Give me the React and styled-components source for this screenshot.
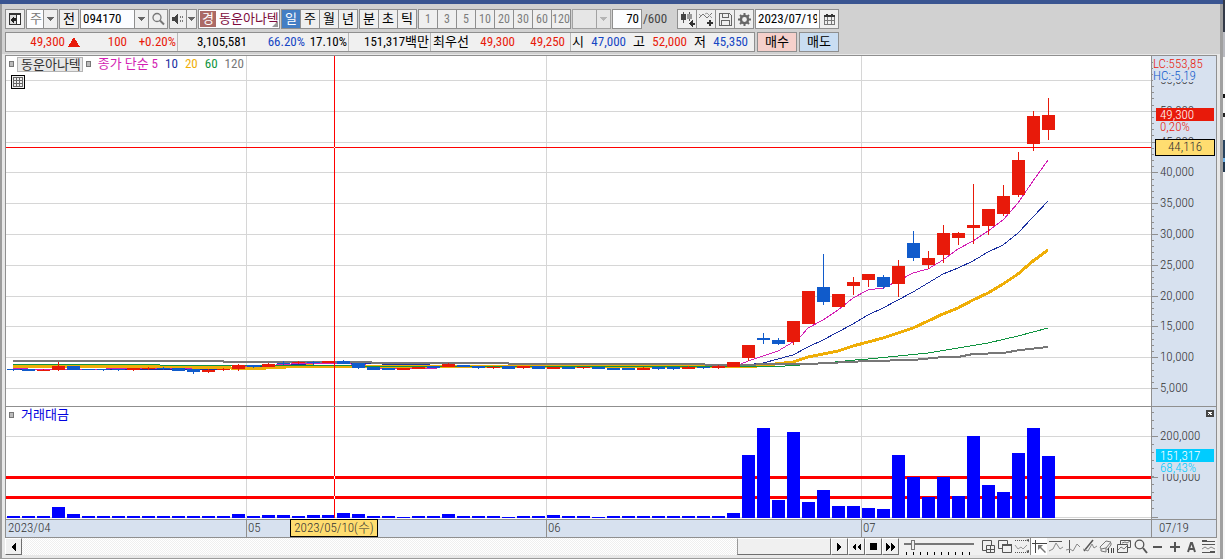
import React, { useState } from 'react'
import styled, { createGlobalStyle } from 'styled-components'

const GlobalStyle = createGlobalStyle`
* { box-sizing: border-box; }
body {
    margin: 0;
    background: #f6f6f6;
    font-family: "Liberation Sans Narrow", "Roboto Condensed", "Open Sans Condensed", "Liberation Sans", "Noto Sans CJK KR", sans-serif;
    font-size: 13px;
    line-height: 16px;
    color: #000;
}
button, input, select {
    font: inherit;
    color: inherit;
    margin: 0;
    padding: 0;
    border: 0;
    border-radius: 0;
    outline: none;
}
button { cursor: pointer; white-space: nowrap; }
svg { display: block; }
`

const UP = '#e81a0a'
const DOWN = '#105bcb'
const LINE = '#8f8f8f'
const GRID = '#d6d6d6'
const AXIS = '#d7e1ef'

/* ---------- window frame ---------- */

const Screen = styled.div`
    display: flex;
    min-height: 100vh;
`

const Window = styled.div`
    flex: 1;
    min-width: 0;
    display: flex;
    flex-direction: column;
    background: #e8e8e8;
    border-bottom: 1px solid #9c9c9c;
`

const Behind = styled.div`
    width: 2px;
    background: linear-gradient(#333a48 32px, #b9bac0 32px 57px, #f6f6f6 57px 94px, #111 94px 98px,
        #f6f6f6 98px 113px, #222 113px 117px, #f6f6f6 117px 140px, #29445f 140px 158px, #72b4e8 158px 162px, #22384f 162px 172px, #f6f6f6 172px);
`

const TitleStrip = styled.div`
    height: 4px;
    background: #3a5591;
`

const Body = styled.div`
    flex: 1;
    display: flex;
    flex-direction: column;
    border-left: 2px solid #9c9c9c;
    border-right: 3px solid #a0a0a0;
`

const Tools = styled.div`
    display: flex;
    flex-direction: column;
    gap: 3px;
    padding: 5px 3px 2px;
    background: #d1d1d1;
    border-bottom: 1px solid #e8e8e8;
`

const Row = styled.div`
    display: flex;
    gap: ${(p) => p.$gap || 1}px;
    height: 20px;
`

/* ---------- toolbar ---------- */

const Group = styled.div`
    position: relative;
    display: flex;
    width: ${(p) => p.$w}px;
    border: 1px solid ${LINE};
    background: ${(p) => (p.$white ? '#fcfdff' : '#efefef')};
    opacity: ${(p) => (p.$dim ? 0.7 : 1)};
`

const Tool = styled.button`
    flex: 1 1 0;
    min-width: 0;
    display: flex;
    align-items: center;
    justify-content: center;
    overflow: hidden;
    font-size: ${(p) => (p.$muted ? 12 : 13)}px;
    color: ${(p) => (p.$on ? '#fff' : p.$muted ? '#7c7c7c' : '#000')};
    background: ${(p) => (p.$on ? '#447ec4' : '#efefef')};
    & + & { border-left: 1px solid ${LINE}; }
`

const SideTool = styled(Tool)`
    flex: 0 0 ${(p) => p.$w}px;
    border-left: 1px solid ${LINE};
`

const Field = styled.input`
    flex: 1;
    width: 100%;
    min-width: 0;
    padding: 0 2px;
    text-align: ${(p) => p.$align || 'left'};
    background: #fcfdff;
`

const Select = styled.select`
    appearance: none;
    width: 100%;
    padding-left: 3px;
    background: transparent;
    color: #777;
    opacity: 1;
`

const SelectArrow = styled.span`
    position: absolute;
    right: 0;
    top: 0;
    bottom: 0;
    width: 14px;
    display: flex;
    align-items: center;
    justify-content: center;
    border-left: 1px solid ${LINE};
    background: #efefef;
    pointer-events: none;
`

const Badge = styled.span`
    width: 16px;
    height: 16px;
    margin: 1px 3px 1px 1px;
    text-align: center;
    color: #fff;
    background: #ab6a66;
`

const StockName = styled.span`
    line-height: 18px;
    color: #7d0a3c;
    white-space: nowrap;
`

const Fold = styled.span`
    position: absolute;
    right: 1px;
    bottom: 1px;
    border: 3px solid;
    border-color: transparent #999 #999 transparent;
`

const Total = styled.span`
    width: 33px;
    line-height: 20px;
    color: #444;
`

/* ---------- quote strip ---------- */

const Quote = styled.div`
    display: flex;
    width: 750px;
    border: 1px solid ${LINE};
    background: #f0f0f0;
`

const QuoteCell = styled.div`
    display: flex;
    width: ${(p) => p.$w}px;
    line-height: 18px;
    & + & { border-left: 1px solid #b8b8b8; }
`

const Value = styled.span`
    width: ${(p) => p.$w}px;
    text-align: right;
    white-space: nowrap;
    color: ${(p) => p.$color || '#000'};
`

const Mark = styled.span`
    width: 15px;
    display: flex;
    align-items: center;
    justify-content: flex-end;
`

const Order = styled.button`
    width: 40px;
    border: 1px solid ${LINE};
    background: ${(p) => (p.$buy ? '#f5d0cb' : '#c9ddf2')};
`

/* ---------- chart ---------- */

const Chart = styled.div`
    display: grid;
    grid-template-columns: minmax(0, 1fr) 66px;
    margin: 0 3px;
    border-top: 1px solid ${LINE};
    border-left: 1px solid ${LINE};
`

const Pane = styled.div`
    position: relative;
    background: #fff;
    border-bottom: 1px solid ${LINE};
`

const Scale = styled.div`
    position: relative;
    font-weight: 300;
    background: ${AXIS};
    border: 1px solid ${LINE};
    border-top: 0;
`

const Dates = styled.div`
    position: relative;
    font-weight: 300;
    background: ${AXIS};
    border-bottom: 1px solid ${LINE};
`

const LastDate = styled(Scale)`
    padding-left: 7px;
    color: #333;
`

const Legend = styled.div`
    position: absolute;
    left: 3px;
    top: 1px;
    display: flex;
    align-items: center;
    gap: 7px;
    height: 14px;
    white-space: nowrap;
`

const Dot = styled.span`
    width: 5px;
    height: 6px;
    border: 1px solid #777;
    background: #bbb;
`

const Tag = styled.span`
    height: 15px;
    line-height: 13px;
    padding: 0 1px 0 3px;
    margin: 0 -4px;
    border: 1px solid #b4b4b4;
    background: #e8e8e8;
    color: #333;
`

const Ink = styled.span`
    color: ${(p) => p.$color};
`

const GridButton = styled.button`
    position: absolute;
    left: 5px;
    top: 19px;
    width: 14px;
    height: 14px;
    border: 1px solid #000;
    background: #eee;
`

const CloseButton = styled.button`
    position: absolute;
    right: 2px;
    top: 3px;
    width: 8px;
    height: 7px;
    background: #444;
`

const CursorDate = styled.span`
    position: absolute;
    left: 284px;
    top: -1px;
    width: 88px;
    height: 18px;
    border: 1px solid #000;
    background: #ffdd70;
    color: #333;
    text-align: center;
    white-space: nowrap;
`

/* ---------- bottom bar ---------- */

const Bottom = styled.div`
    display: flex;
    height: 17px;
    margin: 0 3px 3px;
    background: #f0f0f0;
`

const Push = styled.button`
    width: 17px;
    display: flex;
    align-items: center;
    justify-content: center;
    background: #f0f0f0;
    border: 1px solid;
    border-color: #fff #6e6e6e #6e6e6e #fff;
`

const Track = styled.div`
    flex: 1;
    display: flex;
    justify-content: flex-end;
    background: repeating-conic-gradient(#fff 0 25%, #efefef 0 50%) 0 0 / 2px 2px;
`

const Thumb = styled.div`
    width: 94px;
    background: #f0f0f0;
    border: 1px solid;
    border-color: #fff #6e6e6e #6e6e6e #999;
`

const Zoom = styled.input`
    appearance: none;
    width: 70px;
    height: 17px;
    margin: 0 5px;
    background:
        linear-gradient(#777, #777) 0 5px / 100% 2px no-repeat,
        repeating-linear-gradient(90deg, transparent 0 2px, #000 2px 3px, transparent 3px 7px) 0 14px / 100% 3px no-repeat;
    &::-webkit-slider-thumb {
        appearance: none;
        width: 4px;
        height: 10px;
        margin-top: -4px;
        background: #f0f0f0;
        border: 1px solid #777;
    }
`

const DrawTool = styled.button`
    width: 17px;
    display: flex;
    align-items: center;
    justify-content: center;
    background: ${(p) => (p.$on ? '#fff' : 'transparent')};
    border-left: ${(p) => (p.$on ? '1px solid #888' : 0)};
`

/* ---------- icons ---------- */

const Icon = ({ children, w = 15, h = 15, crisp = true, color = '#555' }) => (
    <svg width={w} height={h} viewBox={`0 0 ${w} ${h}`} fill="none" stroke={color} strokeWidth="1"
        shapeRendering={crisp ? 'crispEdges' : 'auto'} aria-hidden="true">
        {children}
    </svg>
)

const Arrow = ({ color = '#666' }) => (
    <Icon w={7} h={4}><path d="M0 0h7L3.5 4z" fill={color} stroke="none" /></Icon>
)

const PanelIcon = () => (
    <Icon w={14} h={14} color="#333">
        <path d="M1 1h12v12H1z" fill="#333" stroke="none" />
        <path d="M2 3h6v9H2z" fill="#ddd" stroke="none" />
        <path d="M9 3h3v9H9z" fill="#fff" stroke="none" />
        <path d="M6 4v8L2 8z" fill="#222" stroke="none" />
        <path d="M5 6h3v3H5z" fill="#222" stroke="none" />
    </Icon>
)

const SearchIcon = () => (
    <Icon w={14} h={14} crisp={false} color="#777">
        <circle cx="6" cy="5.5" r="4" strokeWidth="1.3" />
        <path d="M9 8.5l4 4" strokeWidth="2" />
    </Icon>
)

const SpeakerIcon = () => (
    <Icon w={14} h={14} color="#444">
        <path d="M1 5h2l4-4v12l-4-4H1z" fill="#444" stroke="none" />
        <path d="M9 4h1v2H9zM9 8h1v2H9zM11 4h1v2h-1zM11 8h1v2h-1z" fill="#777" stroke="none" />
    </Icon>
)

const CandleIcon = () => (
    <Icon w={17} h={16}>
        <path d="M4.5 1v11M10.5 1v9" />
        <path d="M2 3h5v6H2z" fill="#444" stroke="none" />
        <path d="M8 3h5v5H8z" fill="#999" stroke="none" />
        <path d="M12 12h4v2h-4zM14 9v7l-4-3.500z" fill="#333" stroke="none" />
    </Icon>
)

const WaveIcon = () => (
    <Icon w={17} h={16} crisp={false}>
        <path d="M1 7l4-4 4 4 5-5" stroke="#777" />
        <path d="M1 3l2 2M7 3l2-1 5 5" stroke="#999" />
        <path d="M9 11h6v2H9zM11 9h2v6h-2z" fill="#333" stroke="none" />
    </Icon>
)

const SaveIcon = () => (
    <Icon w={15} h={15} color="#666">
        <path d="M1.5 1.5h10l2 2v10h-12zM4.5 1.5v4h6v-4M3.5 13.5v-5h8v5" strokeWidth="1.4" />
    </Icon>
)

const GearIcon = () => (
    <Icon w={15} h={15} crisp={false} color="#666">
        <circle cx="7.5" cy="7.5" r="3.6" strokeWidth="2.4" />
        <path d="M7.5 1v2.5M7.5 11.500v2.500M1 7.500h2.500M11.500 7.500H14M3 3l1.500 1.500M10.500 10.500L12 12M12 3l-1.500 1.500M4.500 10.500L3 12" strokeWidth="2" />
    </Icon>
)

const CalendarIcon = () => (
    <Icon w={13} h={13} color="#777">
        <path d="M1.500 2.500h10v9h-10zM4.500 4v8M8.500 4v8M2 7.500h10" />
        <path d="M1 2h11v2H1zM3 1h2v1H3zM8 1h2v1H8z" fill="#333" stroke="none" />
    </Icon>
)

const drawTools = [
    ['새 창', <><path d="M2.500 1.500h9v10h-9z" /><path d="M6.500 6.500h8v7h-8zM10.500 6.500v7M6.500 10.500h8" fill="#f0f0f0" /></>],
    ['겹치기', <><path d="M1.500 1.500h9v8h-9z" /><path d="M5.500 5.500h9v8h-9z" fill="#f0f0f0" /><path d="M5 5h10v2H5z" fill="#555" stroke="none" /></>],
    ['구간', <><path d="M1 1.500h13M1 13.500h13" strokeDasharray="1 1" /><path d="M1 6l3 4 3-2 2 2 4-4" stroke="#999" /><path d="M12 1l3 2v-3zM12 12l3 2v-3z" fill="#555" stroke="none" /></>],
    ['십자선', <><path d="M3.500 1v13M0 4.500h15" stroke="#444" /><path d="M6 6h5l-2 2 5 5-1 1-5-5-2 2z" fill="#777" stroke="none" /></>],
    ['수평선', <><path d="M1 2.500h13" /><path d="M1 12l4-2 3-6 4 6 3-2" stroke="#888" /></>],
    ['수직선', <><path d="M4.500 1v13" /><path d="M1 11l4-1 3 2 4-7 3 3" stroke="#888" /></>],
    ['추세선', <><path d="M2 12L11 1" strokeWidth="1.500" /><path d="M1 10l5 2 4-7 2 4 3-2" stroke="#888" /></>],
    ['전체 지우기', <><path d="M1 8l6-6 5 1-5 6-5 1zM2 10v2l5 1v-4M12 4v2l-4 5" stroke="#777" /><path d="M9.500 9v5M12.500 9v5M14.500 9v5" stroke="#444" /></>],
    ['차트 겹침', <><path d="M4.500 1.500h10v7h-10z" /><path d="M1.500 5.500h10v8h-10z" fill="#f0f0f0" /><path d="M2 11l3-3 3 2 3-3M6 4l3-1 2 1 3-2" stroke="#777" /></>],
    ['확대경', <><circle cx="6.500" cy="5.500" r="4.300" strokeWidth="1.300" /><path d="M10 9l4 5" strokeWidth="2" /></>],
    ['축소', <path d="M3 7h9v2H3z" fill="#555" stroke="none" />],
    ['확대', <path d="M3 7h10v2H3zM7 3h2v10H7z" fill="#555" stroke="none" />],
    ['글자', <path d="M4 13L7 4h1l3 9M5 10h5" strokeWidth="2" />],
    ['설정', <><path d="M1 2.500h13M1 5.500h13M1 13.500h13" /><path d="M1 1h5v2H1zM9 12h5v2H9z" fill="#555" stroke="none" /><path d="M1 10l3-2 3 2 3-2 4 2" stroke="#888" /></>],
]

/* ---------- chart data (pane pixels) ---------- */

// [up, bodyTop, bodyBottom, high, low]
const candles = [
    [0, 313, 314, 313, 315], [0, 313, 315, 313, 315], [1, 314, 315, 313, 315], [1, 310, 314, 306, 315], [0, 310, 314, 310, 314],
    [0, 313, 314, 313, 314], [0, 313, 314, 313, 315], [0, 313, 314, 313, 315], [1, 312, 314, 312, 315], [1, 312, 313, 311, 314],
    [0, 312, 313, 311, 314], [0, 312, 315, 312, 315], [0, 313, 316, 313, 318], [1, 314, 316, 313, 317], [1, 313, 314, 312, 315],
    [1, 309, 313, 308, 315], [0, 309, 311, 309, 312], [1, 308, 311, 307, 311], [0, 307, 308, 305, 309], [1, 306, 307, 305, 308],
    [0, 306, 307, 305, 309], [1, 305, 307, 305, 307], [0, 305, 308, 304, 308], [0, 307, 312, 307, 313], [0, 311, 314, 311, 314],
    [0, 312, 314, 312, 314], [1, 312, 314, 312, 314], [1, 311, 313, 311, 313], [0, 310, 312, 310, 312], [1, 308, 311, 307, 311],
    [0, 309, 311, 309, 311], [0, 310, 312, 310, 313], [1, 311, 312, 310, 313], [0, 310, 313, 310, 313], [1, 310, 312, 310, 313],
    [0, 310, 313, 310, 313], [1, 311, 313, 311, 313], [0, 311, 313, 311, 313], [1, 311, 312, 311, 313], [0, 311, 313, 311, 313],
    [0, 312, 314, 312, 314], [0, 312, 314, 312, 314], [1, 312, 314, 311, 314], [0, 311, 313, 311, 314], [0, 311, 313, 311, 314],
    [1, 311, 313, 310, 313], [0, 311, 312, 311, 313], [1, 310, 312, 309, 313], [1, 306, 311, 306, 311], [1, 289, 302, 289, 305],
    [0, 282, 284, 277, 288], [0, 284, 288, 282, 289], [1, 265, 286, 265, 289], [1, 235, 268, 235, 268], [0, 231, 246, 198, 249],
    [1, 238, 251, 238, 251], [1, 226, 230, 221, 239], [1, 218, 224, 218, 231], [0, 221, 231, 219, 233], [1, 210, 228, 204, 241],
    [0, 187, 202, 175, 205], [1, 202, 209, 195, 213], [1, 177, 199, 169, 207], [1, 177, 182, 176, 189], [1, 169, 172, 128, 188],
    [1, 153, 170, 153, 179], [1, 140, 158, 129, 160], [1, 104, 139, 96, 141], [1, 60, 88, 55, 95], [1, 59, 74, 42, 84],
]

const volumes = [
    2, 2, 2, 11, 4, 2, 2, 2, 2, 2, 2, 2, 2, 2, 2, 4, 2, 3, 3, 2, 3, 3, 5, 4, 2, 2, 1, 2, 2, 4, 2, 2, 2, 1, 2,
    2, 3, 2, 2, 1, 2, 2, 2, 2, 2, 2, 2, 2, 5, 63, 90, 18, 86, 16, 28, 12, 12, 10, 9, 63, 41, 21, 41, 22, 82, 33, 26, 65, 90, 62,
]

const averages = [
    { color: '#1a2fa0', width: 1, points: '7,313 220,313 300,308 330,307 375,308 424,309 430,311 730,310 757,307 787,299 802,291 817,284 832,276 847,268 862,259 877,252 892,244 907,236 922,227 937,218 952,212 967,205 982,196 997,189 1012,177 1027,161 1042,145' },
    { color: '#d31fb4', width: 1, points: '7,312 22,313 100,313 112,312 220,312 270,309 300,307 330,307 360,309 375,313 432,312 460,311 700,312 735,308 742,305 757,300 772,295 787,286 796,279 802,272 817,264 832,254 847,242 862,234 877,232 892,225 907,217 922,213 937,204 952,193 967,185 982,175 997,164 1012,147 1027,125 1042,104' },
    { color: '#efae07', width: 3, points: '7,310 180,310 186,311 225,312 260,312 300,310 730,311 751,310 769,308 787,306 802,301 817,298 832,295 847,290 862,286 877,282 892,277 907,272 922,265 937,258 952,252 967,244 982,237 997,228 1012,218 1027,205 1042,194' },
    { color: '#0f9440', width: 1, points: '7,308 149,308 154,309 344,309 350,310 394,311 729,310 779,310 809,308 849,304 862,303 892,300 922,297 952,292 982,287 1012,280 1042,272' },
    { color: '#777', width: 2, points: '7,305 217,305 218,306 364,306 367,307 502,307 503,308 698,308 700,309 802,308 862,305 907,304 937,301 952,301 967,298 997,297 1014,294 1042,291' },
]

const priceTicks = [
    ['55,000', 24], ['50,000', 55], ['45,000', 86], ['40,000', 116], ['35,000', 147], ['30,000', 178],
    ['25,000', 209], ['20,000', 240], ['15,000', 270], ['10,000', 301], ['5,000', 332],
]
const months = [['2023/04', 0], ['05', 240], ['06', 540], ['07', 855]]
const CURSOR_X = 328
const STEP = 15

const MonthLines = () => months.slice(1).map(([m, x]) => (
    <rect key={m} x={x} y="0" width="1" height="100%" fill={GRID} />
))

const PricePlot = () => (
    <svg width="100%" height="350" shapeRendering="crispEdges" role="img" aria-label="동운아나텍 일봉">
        {priceTicks.map(([t, y]) => <rect key={t} x="0" y={y} width="100%" height="1" fill={GRID} />)}
        <MonthLines />
        {averages.map((a) => (
            <polyline key={a.color} points={a.points} fill="none" stroke={a.color} strokeWidth={a.width} />
        ))}
        {candles.map(([up, top, bottom, high, low], i) => (
            <g key={i} fill={up ? UP : DOWN}>
                <rect x={i * STEP + 7} y={high} width="1" height={low - high} />
                <rect x={i * STEP + 1} y={top} width="13" height={bottom - top} />
            </g>
        ))}
        <rect x="0" y="91" width="100%" height="1" fill="#f00" />
        <rect x={CURSOR_X} y="0" width="1" height="100%" fill="#f00" />
        <rect x={CURSOR_X} y="91" width="1" height="1" fill="#fff" />
    </svg>
)

const VolumePlot = () => (
    <svg width="100%" height="112" shapeRendering="crispEdges" role="img" aria-label="거래대금">
        <rect x="0" y="29" width="100%" height="1" fill={GRID} />
        <rect x="0" y="110" width="100%" height="1" fill={GRID} />
        <MonthLines />
        <rect x="0" y="69" width="100%" height="3" fill="#f00" />
        <rect x="0" y="89" width="100%" height="3" fill="#f00" />
        {volumes.map((v, i) => <rect key={i} x={i * STEP + 1} y={111 - v} width="13" height={v} fill="#00f" />)}
        <rect x={CURSOR_X} y="0" width="1" height="111" fill="#f00" />
        <rect x={CURSOR_X} y="69" width="1" height="3" fill="#fff" />
        <rect x={CURSOR_X} y="89" width="1" height="3" fill="#fff" />
    </svg>
)

const PriceScale = () => (
    <svg width="64" height="350" shapeRendering="crispEdges" fill="#333">
        {Array.from({ length: 54 }, (_, i) => (
            <rect key={i} x="0" y={Math.round(24 + (i - 3) * 6.16)} width="2" height="1" fill={LINE} />
        ))}
        {priceTicks.map(([t, y]) => (
            <g key={t}>
                <rect x="0" y={y} width="6" height="1" fill={LINE} />
                <text x="8" y={y + 4}>{t}</text>
            </g>
        ))}
        <rect x="1" y="1" width="62" height="25" fill={AXIS} />
        <text x="1" y="12" fill={UP}>LC:553,85</text>
        <text x="1" y="24" fill={DOWN}>HC:-5,19</text>
        <rect x="4" y="52" width="58" height="13" fill={UP} />
        <text x="8" y="63" fill="#fff">49,300</text>
        <rect x="7" y="65" width="50" height="14" fill={AXIS} />
        <text x="8" y="75" fill={UP}>0,20%</text>
        <rect x="3" y="83" width="60" height="17" fill="#000" />
        <rect x="4" y="84" width="58" height="15" fill="#ffdd70" />
        <text x="16" y="95">44,116</text>
    </svg>
)

const VolumeScale = () => (
    <svg width="64" height="112" shapeRendering="crispEdges" fill="#333">
        {Array.from({ length: 13 }, (_, i) => (
            <rect key={i} x="0" y={5 + i * 8} width="2" height="1" fill={LINE} />
        ))}
        <rect x="0" y="29" width="6" height="1" fill={LINE} />
        <rect x="0" y="70" width="6" height="1" fill={LINE} />
        <rect x="0" y="110" width="6" height="1" fill={LINE} />
        <text x="8" y="33">200,000</text>
        <text x="8" y="74">100,000</text>
        <rect x="7" y="55" width="50" height="12" fill={AXIS} />
        <rect x="4" y="42" width="58" height="13" fill="#00ccff" />
        <text x="8" y="53" fill="#fff">151,317</text>
        <text x="8" y="65" fill="#00ccff">68,43%</text>
    </svg>
)

const App = () => {
    const [period, setPeriod] = useState('일')
    const [tool, setTool] = useState('십자선')
    const [code, setCode] = useState('094170')
    const [count, setCount] = useState('70')
    const [date, setDate] = useState('2023/07/19')

    const periodButton = (p) => (
        <Tool key={p} $on={p === period} aria-pressed={p === period} onClick={() => setPeriod(p)}>{p}</Tool>
    )

    return (
        <>
            <GlobalStyle />
            <Screen>
                <Window>
                    <TitleStrip />
                    <Body>
                        <Tools>
                            <Row>
                                <Group $w={20}><Tool aria-label="패널"><PanelIcon /></Tool></Group>
                                <Group $w={32} $white>
                                    <Select aria-label="종목 구분"><option>주</option></Select>
                                    <SelectArrow><Arrow /></SelectArrow>
                                </Group>
                                <Group $w={20}><Tool>전</Tool></Group>
                                <Group $w={88}>
                                    <Field aria-label="종목코드" value={code} onChange={(e) => setCode(e.target.value)} />
                                    <SideTool $w={14} aria-label="최근 종목"><Arrow /></SideTool>
                                    <SideTool $w={19} aria-label="검색"><SearchIcon /></SideTool>
                                </Group>
                                <Group $w={28}>
                                    <Tool aria-label="소리"><SpeakerIcon /></Tool>
                                    <SideTool $w={10} aria-label="소리 설정"><Arrow /></SideTool>
                                </Group>
                                <Group $w={82} $white>
                                    <Badge>경</Badge>
                                    <StockName>동운아나텍</StockName>
                                    <Fold />
                                </Group>
                                <Group $w={77}>{['일', '주', '월', '년'].map(periodButton)}</Group>
                                <Group $w={58}>{['분', '초', '틱'].map(periodButton)}</Group>
                                <Group $w={153}>
                                    {['1', '3', '5', '10', '20', '30', '60', '120'].map((n) => <Tool key={n} $muted>{n}</Tool>)}
                                </Group>
                                <Group $w={39} $dim>
                                    <Select aria-label="분 단위" disabled />
                                    <SelectArrow><Arrow color="#aaa" /></SelectArrow>
                                </Group>
                                <Group $w={30}>
                                    <Field aria-label="봉 개수" $align="right" value={count} onChange={(e) => setCount(e.target.value)} />
                                </Group>
                                <Total>/600</Total>
                                <Group $w={77}>
                                    <Tool aria-label="차트 추가"><CandleIcon /></Tool>
                                    <Tool aria-label="지표 추가"><WaveIcon /></Tool>
                                    <Tool aria-label="저장"><SaveIcon /></Tool>
                                    <Tool aria-label="설정"><GearIcon /></Tool>
                                </Group>
                                <Group $w={84}>
                                    <Field aria-label="날짜" value={date} onChange={(e) => setDate(e.target.value)} />
                                    <SideTool $w={19} aria-label="달력"><CalendarIcon /></SideTool>
                                </Group>
                            </Row>
                            <Row $gap={2}>
                                <Quote>
                                    <QuoteCell $w={171}>
                                        <Value $w={59} $color={UP}>49,300</Value>
                                        <Mark><Icon w={12} h={10}><path d="M6 0l6 10H0z" fill={UP} stroke="none" /></Icon></Mark>
                                        <Value $w={47} $color={UP}>100</Value>
                                        <Value $w={49} $color={UP}>+0.20%</Value>
                                    </QuoteCell>
                                    <QuoteCell $w={171}>
                                        <Value $w={69}>3,105,581</Value>
                                        <Value $w={58} $color="#1546c4">66.20%</Value>
                                        <Value $w={42}>17.10%</Value>
                                    </QuoteCell>
                                    <QuoteCell $w={82}>
                                        <Value $w={80}>151,317백만</Value>
                                    </QuoteCell>
                                    <QuoteCell $w={140}>
                                        <Value $w={38}>최우선</Value>
                                        <Value $w={46} $color={UP}>49,300</Value>
                                        <Value $w={50} $color={UP}>49,250</Value>
                                    </QuoteCell>
                                    <QuoteCell $w={184}>
                                        <Value $w={13}>시</Value>
                                        <Value $w={42} $color="#1546c4">47,000</Value>
                                        <Value $w={19}>고</Value>
                                        <Value $w={42} $color={UP}>52,000</Value>
                                        <Value $w={19}>저</Value>
                                        <Value $w={42} $color="#1546c4">45,350</Value>
                                    </QuoteCell>
                                </Quote>
                                <Order $buy>매수</Order>
                                <Order>매도</Order>
                            </Row>
                        </Tools>

                        <Chart>
                            <Pane>
                                <PricePlot />
                                <Legend>
                                    <Dot />
                                    <Tag>동운아나텍</Tag>
                                    <Dot />
                                    <Ink $color="#d31fb4">종가 단순 5</Ink>
                                    <Ink $color="#1a2fa0">10</Ink>
                                    <Ink $color="#efae07">20</Ink>
                                    <Ink $color="#0f9440">60</Ink>
                                    <Ink $color="#777">120</Ink>
                                </Legend>
                                <GridButton aria-label="표 보기">
                                    <Icon w={12} h={12} color="#666"><path d="M1.500 1.500h9v9h-9zM4.500 1v10M7.500 1v10M1 4.500h10M1 7.500h10" /></Icon>
                                </GridButton>
                            </Pane>
                            <Scale><PriceScale /></Scale>
                            <Pane>
                                <VolumePlot />
                                <Legend>
                                    <Dot />
                                    <Ink $color="#0000e0">거래대금</Ink>
                                </Legend>
                            </Pane>
                            <Scale>
                                <VolumeScale />
                                <CloseButton aria-label="닫기">
                                    <Icon w={8} h={7} color="#fff"><path d="M2 2l4 3M6 2L2 5" /></Icon>
                                </CloseButton>
                            </Scale>
                            <Dates>
                                <svg width="100%" height="17" shapeRendering="crispEdges" fill="#333">
                                    {months.map(([m, x]) => (
                                        <g key={m}>
                                            {x > 0 && <rect x={x} y="0" width="1" height="17" fill={LINE} />}
                                            <text x={x + 2} y="12">{m}</text>
                                        </g>
                                    ))}
                                </svg>
                                <CursorDate>2023/05/10(수)</CursorDate>
                            </Dates>
                            <LastDate>07/19</LastDate>
                        </Chart>

                        <Bottom>
                            <Push aria-label="이전"><Icon w={5} h={8}><path d="M5 0v8L0 4z" fill="#000" stroke="none" /></Icon></Push>
                            <Track><Thumb /></Track>
                            <Push aria-label="다음"><Icon w={5} h={8}><path d="M0 0v8l5-4z" fill="#000" stroke="none" /></Icon></Push>
                            <Push aria-label="뒤로 재생"><Icon w={9} h={8}><path d="M4 0v8L0 4zM9 0v8L5 4z" fill="#000" stroke="none" /></Icon></Push>
                            <Push aria-label="정지"><Icon w={7} h={7}><path d="M0 0h7v7H0z" fill="#000" stroke="none" /></Icon></Push>
                            <Push aria-label="앞으로 재생"><Icon w={9} h={8}><path d="M0 0v8l4-4zM5 0v8l4-4z" fill="#000" stroke="none" /></Icon></Push>
                            <Zoom type="range" aria-label="재생 속도" min="0" max="10" defaultValue="1" />
                            {drawTools.map(([name, art]) => (
                                <DrawTool key={name} aria-label={name} $on={name === tool} onClick={() => setTool(name)}>
                                    <Icon crisp={false}>{art}</Icon>
                                </DrawTool>
                            ))}
                        </Bottom>
                    </Body>
                </Window>
                <Behind />
            </Screen>
        </>
    )
}

export default App
